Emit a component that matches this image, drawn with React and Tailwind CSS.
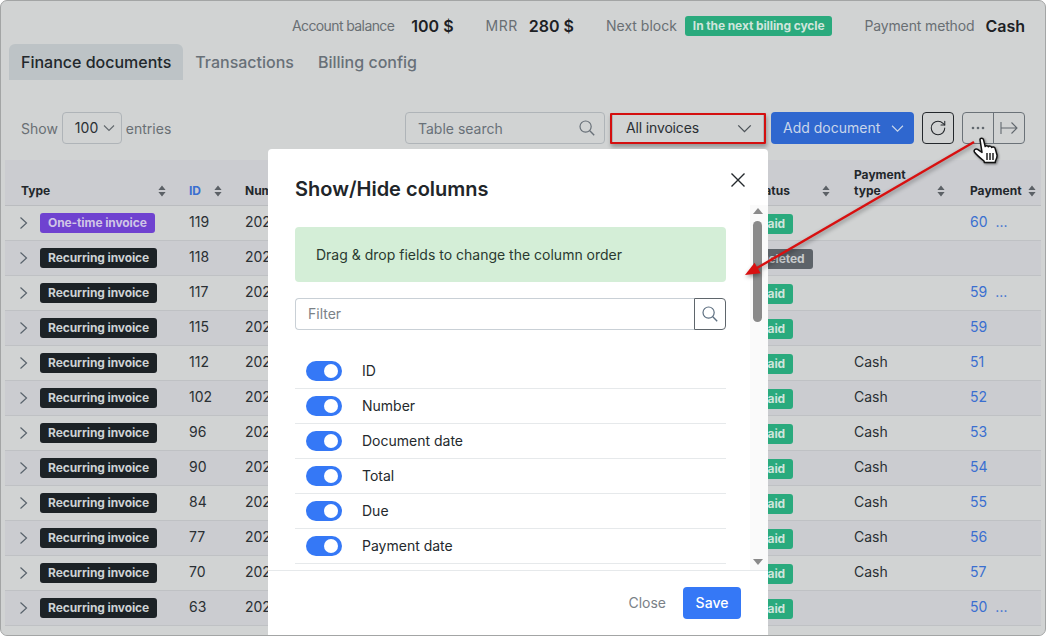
import React from 'react';
import { RotateCw } from 'lucide-react';

const rows = [
  { id: 119, kind: 'one', status: 'Paid', pay: '', link: '60', more: true },
  { id: 118, kind: 'rec', status: 'Deleted', pay: '', link: '', more: false },
  { id: 117, kind: 'rec', status: 'Paid', pay: '', link: '59', more: true },
  { id: 115, kind: 'rec', status: 'Paid', pay: '', link: '59', more: false },
  { id: 112, kind: 'rec', status: 'Paid', pay: 'Cash', link: '51', more: false },
  { id: 102, kind: 'rec', status: 'Paid', pay: 'Cash', link: '52', more: false },
  { id: 96, kind: 'rec', status: 'Paid', pay: 'Cash', link: '53', more: false },
  { id: 90, kind: 'rec', status: 'Paid', pay: 'Cash', link: '54', more: false },
  { id: 84, kind: 'rec', status: 'Paid', pay: 'Cash', link: '55', more: false },
  { id: 77, kind: 'rec', status: 'Paid', pay: 'Cash', link: '56', more: false },
  { id: 70, kind: 'rec', status: 'Paid', pay: 'Cash', link: '57', more: false },
  { id: 63, kind: 'rec', status: 'Paid', pay: '', link: '50', more: true },
];

const columns = ['ID', 'Number', 'Document date', 'Total', 'Due', 'Payment date'];

const Badge = ({ className, children }) => (
  <span className={`inline-flex h-5 items-center rounded-[3px] px-2 text-xs font-bold tracking-[-0.1px] whitespace-nowrap ${className}`}>
    {children}
  </span>
);

const Sort = ({ className = '' }) => (
  <svg width="8" height="12" viewBox="0 0 8 12" className={className}>
    <path d="M4 0.5 L7.6 5 H0.4 Z M4 11.5 L0.4 7 H7.6 Z" fill="#5c6166" />
  </svg>
);

const Chevron = ({ className = '', w = 12 }) => (
  <svg width={w} height={w} viewBox="0 0 12 12" fill="none" stroke="currentColor" strokeWidth="1.1" className={className}>
    <path d="M1 3.5 L6 8.5 L11 3.5" />
  </svg>
);

const SearchIcon = () => (
  <svg width="16" height="16" viewBox="0 0 16 16" fill="none" stroke="currentColor" strokeWidth="1.2">
    <circle cx="6.6" cy="6.6" r="5.6" />
    <path d="M10.8 10.8 L15.2 15.2" strokeWidth="1.4" />
  </svg>
);

const Toggle = () => (
  <span className="flex h-5 w-9 items-center justify-end rounded-full bg-[#3578f6] pr-1">
    <span className="h-[14px] w-[14px] rounded-full bg-white" />
  </span>
);

const Cursor = () => (
  <svg width="30" height="28" viewBox="0 0 30 28" className="absolute left-[971px] top-[136px] drop-shadow-[1px_1px_1px_rgba(0,0,0,0.45)]">
    <path
      d="M8 2.6 C8 0.8 11 0.6 11.5 2.6 L13.2 9.6 C13.6 8.4 16 8.2 16.4 9.8 C17 8.8 19.2 8.8 19.6 10.4 C20.4 9.6 22.8 9.8 23.2 11.6 L25 18 C25.4 20.6 24 22.4 23.4 24.2 L23.2 25.6 H12.4 L12 24 C9.5 22 5 18.4 2.6 15.2 C1.2 13.2 3.6 11 5.6 12.4 L10 15.4 Z"
      fill="#fff"
      stroke="#111"
      strokeWidth="1.5"
      strokeLinejoin="round"
    />
    <path d="M15 16 V23 M18 16 V23 M21 16 V23" stroke="#111" strokeWidth="1.4" />
  </svg>
);

export default function App() {
  return (
    <div className="relative h-[636px] w-[1046px] overflow-hidden rounded-[7px] border border-[#a3a5a5] bg-[#d1d3d3] font-['Inter',sans-serif] text-sm text-[#2a2f33]">
      <div className="ml-[4px] mr-[4px]">
        <div className="flex h-[43px] items-center justify-end pr-[16px] pt-[6px]">
          <span className="tracking-[-0.6px] text-[#696f73]">Account balance</span>
          <span className="ml-[17px] text-base font-semibold text-[#1d2125]">100 $</span>
          <span className="ml-[32px] tracking-[0.5px] text-[#696f73]">MRR</span>
          <span className="ml-[11px] text-base font-semibold text-[#1d2125]">280 $</span>
          <span className="ml-[32px] text-[#696f73]">Next block</span>
          <Badge className="ml-[8px] bg-[#2aaa7d] text-[#cfe5dc]">In the next billing cycle</Badge>
          <span className="ml-[32px] tracking-[-0.14px] text-[#696f73]">Payment method</span>
          <span className="ml-[11px] text-base font-semibold text-[#1d2125]">Cash</span>
        </div>

        <div className="flex pl-[4px] text-base font-medium">
          <div className="flex h-9 items-center rounded-t-[6px] bg-[#bdc3c6] px-3 text-[#22282c]">Finance documents</div>
          <div className="flex h-9 items-center px-3 text-[#687078]">Transactions</div>
          <div className="flex h-9 items-center px-3 text-[#687078]">Billing config</div>
        </div>

        <div className="mt-8 flex h-8 items-center pl-4 pr-4">
          <span className="pt-px text-[#696f73]">Show</span>
          <div className="ml-[4px] flex h-8 w-[60px] items-center justify-between rounded-[4px] border border-[#afb4b8] pl-3 pr-[6px]">
            100
            <Chevron className="text-[#62686d]" />
          </div>
          <span className="ml-1 pt-px text-[#696f73]">entries</span>

          <div className="ml-auto flex h-8 w-[200px] items-center justify-between rounded-[4px] border border-[#afb4b8] pl-3 pr-[9px] text-[#687078]">
            <span className="pt-px">Table search</span>
            <SearchIcon />
          </div>
          <div className="ml-[5px] flex h-[31px] w-[156px] rounded-[1px] border-2 border-[#d40f0f] shadow-[1px_3px_4px_rgba(0,0,0,0.3)]">
            <div className="flex flex-1 items-center justify-between border-x border-[#afb4b8] pl-[13px] pr-[11px]">
              <span className="tracking-[-0.15px]">All invoices</span>
              <Chevron w={15} className="text-[#4e5459]" />
            </div>
          </div>
          <div className="ml-[5px] flex h-8 w-[143px] items-center justify-between rounded-[4px] bg-[#2f67cf] pl-3 pr-[10px] text-[#c9d6ea]">
            Add document
            <Chevron w={13} />
          </div>
          <div className="ml-2 flex h-8 w-8 items-center justify-center rounded-[4px] border border-[#24282c] text-[#24282c]">
            <RotateCw size={18} strokeWidth={1.4} />
          </div>
          <div className="ml-2 flex h-8 w-[63px] rounded-[4px] border border-[#6b7278] text-[#62696f]">
            <div className="flex flex-1 items-center justify-center border-r border-[#6b7278]">
              <svg width="14" height="4" viewBox="0 0 14 4" fill="currentColor">
                <circle cx="2" cy="2" r="1.3" />
                <circle cx="7" cy="2" r="1.3" />
                <circle cx="12" cy="2" r="1.3" />
              </svg>
            </div>
            <div className="flex flex-1 items-center justify-center">
              <svg width="18" height="14" viewBox="0 0 18 14" fill="none" stroke="currentColor" strokeWidth="1.1">
                <path d="M1 1 V13 M1.5 7 H17 M11.5 1.5 L17 7 L11.5 12.5" />
              </svg>
            </div>
          </div>
        </div>

        <div className="mt-4">
          <div className="flex h-[46px] items-end border-b border-[#babcbf] bg-[#cbccd0] pb-[6px] text-xs leading-4 font-bold text-[#22272b]">
            <div className="flex w-[168px] items-center justify-between pl-4 pr-[7px]">Type<Sort /></div>
            <div className="flex w-[56px] items-center justify-between pl-4 pr-[7px] text-[#3a6fd0]">ID<Sort /></div>
            <div className="flex w-[505px] items-center pl-4">Number</div>
            <div className="flex w-[104px] items-center justify-between pl-[18px] pr-[8px]">Status<Sort /></div>
            <div className="flex w-[116px] items-center justify-between pl-4 pr-[9px]">
              <span>Payment<br />type</span>
              <Sort className="mt-4" />
            </div>
            <div className="flex w-[87px] items-center justify-between pl-4 pr-[5px]">Payment<Sort /></div>
          </div>

          {rows.map((row, i) => (
            <div key={row.id} className={`flex h-[35px] items-center border-b border-[#bfc1c4] ${i % 2 === 0 ? 'bg-[#d1d3d3]' : 'bg-[#cbccd0]'}`}>
              <div className="flex w-[168px] items-center pl-[13px]">
                <svg width="12" height="14" viewBox="0 0 12 14" fill="none" stroke="#59636c" strokeWidth="1.2" className="mt-[-1px] shrink-0">
                  <path d="M2.5 1.5 L8.5 7 L2.5 12.5" />
                </svg>
                {row.kind === 'one' ? (
                  <Badge className="ml-[10px] bg-[#6f42d0] text-[#cfc5e6]">One-time invoice</Badge>
                ) : (
                  <Badge className="ml-[10px] bg-[#1c2226] text-[#cdd2d4]">Recurring invoice</Badge>
                )}
              </div>
              <div className="w-[56px] pb-[2px] pl-4">{row.id}</div>
              <div className="w-[505px] pb-[2px] pl-4">202</div>
              <div className="w-[104px] pl-[18px]">
                {row.status === 'Paid' ? (
                  <Badge className="bg-[#2aaa7d] text-[#cfe5dc]">Paid</Badge>
                ) : (
                  <Badge className="bg-[#5d6369] text-[#c8cbcd]">Deleted</Badge>
                )}
              </div>
              <div className="w-[116px] pb-[2px] pl-4">{row.pay}</div>
              <div className="flex w-[87px] items-baseline pb-[2px] pl-4 text-[#3a6fd0]">
                {row.link}
                {row.more && <span className="ml-[8px]">...</span>}
              </div>
            </div>
          ))}
          <div className="h-[35px] bg-[#d1d3d3]" />
        </div>
      </div>

      <div className="absolute left-[267px] top-[148px] flex h-[488px] w-[500px] flex-col rounded-t-[4px] bg-white text-[#24292d]">
        <div className="flex h-[56px] shrink-0 items-start justify-between pl-[27px] pr-[22px] pt-[26px]">
          <span className="text-xl leading-7 font-semibold text-[#212529]">Show/Hide columns</span>
          <svg width="16" height="16" viewBox="0 0 16 16" fill="none" stroke="#24292d" strokeWidth="1.4" className="mt-[-3px]">
            <path d="M1.5 1.5 L14.5 14.5 M14.5 1.5 L1.5 14.5" />
          </svg>
        </div>

        <div className="flex h-[366px] shrink-0 overflow-hidden border-b border-[#e6e9eb]">
          <div className="w-[482px] shrink-0 overflow-hidden pl-[27px] pr-6 pt-[22px]">
            <div className="flex h-[55px] items-center rounded-[4px] bg-[#d4eed7] pl-[21px] text-[#2a3a30]">
              Drag &amp; drop fields to change the column order
            </div>
            <div className="mt-4 flex h-8">
              <div className="flex flex-1 items-center rounded-l-[4px] border border-r-0 border-[#c9d0d6] pl-3 text-[#7b8287]">Filter</div>
              <div className="flex w-8 items-center justify-center rounded-r-[4px] border border-[#5f666c] text-[#5d6f80]">
                <SearchIcon />
              </div>
            </div>
            <div className="mt-6">
              {columns.map(name => (
                <div key={name} className="flex h-[35px] items-center gap-5 border-b border-[#e6e9eb] pl-[11px]">
                  <Toggle />
                  {name}
                </div>
              ))}
            </div>
          </div>
          <div className="flex flex-1 flex-col items-center bg-[#fafafa] pr-[3px] pt-[3px]">
            <svg width="10" height="6" viewBox="0 0 10 6"><path d="M5 0 L10 6 H0 Z" fill="#8a8a8a" /></svg>
            <div className="mt-[7px] h-[101px] w-[9px] rounded-full bg-[#8a8a8a]" />
            <svg width="10" height="6" viewBox="0 0 10 6" className="mt-auto mb-[5px]"><path d="M5 6 L10 0 H0 Z" fill="#8a8a8a" /></svg>
          </div>
        </div>

        <div className="flex flex-1 items-start justify-end pr-[27px] pt-4">
          <span className="mr-[17px] flex h-8 items-center text-[#7a8187]">Close</span>
          <span className="flex h-8 w-[58px] items-center justify-center rounded-[4px] bg-[#3578f6] font-medium text-white">Save</span>
        </div>
      </div>

      <svg width="1046" height="636" className="pointer-events-none absolute left-[-1px] top-[-1px] drop-shadow-[1px_2px_2px_rgba(0,0,0,0.4)]">
        <path d="M974 142 L757 268" stroke="#d81010" strokeWidth="2.4" fill="none" />
        <path d="M745 275 L754.6 262.7 L760.6 273.3 Z" fill="#d81010" />
      </svg>
      <Cursor />
    </div>
  );
}
